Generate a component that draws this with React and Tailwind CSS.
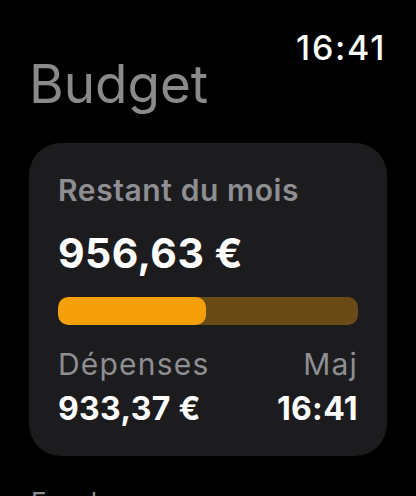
import React from 'react';

const budget = {
  remaining: '956,63 €',
  spent: '933,37 €',
  updated: '16:41',
  ratio: 933.37 / (933.37 + 956.63),
};

export default function App() {
  return (
    <div
      className="w-[416px] h-[496px] overflow-hidden bg-black text-white"
      style={{ fontFamily: 'Inter, "Noto Sans", sans-serif' }}
    >
      {/* status bar */}
      <div className="flex justify-end pr-[30px] pt-[31px]">
        <span className="text-[34px] leading-[33px] font-medium tracking-[0.05em]">16:41</span>
      </div>

      <div className="px-[29px]">
        <h1 className="text-[53px] leading-[40px] font-normal text-[#8a8a8d]">Budget</h1>

        {/* summary card */}
        <div className="mt-[39px] rounded-[32px] bg-[#1c1c1e] px-[29px] pt-[29px] pb-[28px]">
          <p className="text-[30px] leading-[36px] font-semibold tracking-[0.02em] text-[#8e8e93]">
            Restant du mois
          </p>
          <p className="mt-[21px] text-[41px] leading-[48px] font-bold tracking-[0.01em]">
            {budget.remaining}
          </p>

          <div className="mt-[20px] h-[28px] rounded-[10px] bg-[#6a4a17] overflow-hidden">
            <div
              className="h-full rounded-[10px] bg-[#f59f0b]"
              style={{ width: `${budget.ratio * 100}%` }}
            />
          </div>

          <div className="mt-[21px] flex justify-between text-[30px] leading-[36px] tracking-[0.04em] text-[#8e8e93]">
            <span>Dépenses</span>
            <span>Maj</span>
          </div>
          <div className="mt-[8px] flex justify-between text-[32px] leading-[38px] font-bold tracking-[0.01em]">
            <span>{budget.spent}</span>
            <span>{budget.updated}</span>
          </div>
        </div>

        <h2 className="mt-[30px] pl-[2px] text-[26px] leading-[32px] text-[#8e8e93]">Enveloppes</h2>
      </div>
    </div>
  );
}
